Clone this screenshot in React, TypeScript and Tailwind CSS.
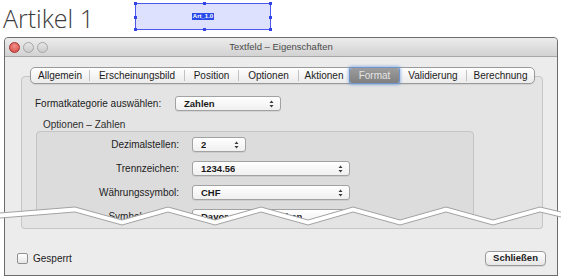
import React from 'react'

const TABS = [
  { label: 'Allgemein', w: 'w-[58px]' },
  { label: 'Erscheinungsbild', w: 'w-[94px]' },
  { label: 'Position', w: 'w-[53px]' },
  { label: 'Optionen', w: 'w-[59px]' },
  { label: 'Aktionen', w: 'w-[50px]' },
  { label: 'Format', w: 'w-[49px]', active: true },
  { label: 'Validierung', w: 'w-[66px]' },
  { label: 'Berechnung', w: 'w-[67px]' },
]

const ROWS = [
  { label: 'Dezimalstellen:', value: '2', w: 'w-[54px]' },
  { label: 'Trennzeichen:', value: '1234.56', w: 'w-[158px]' },
  { label: 'Währungssymbol:', value: 'CHF', w: 'w-[158px]' },
  { label: 'Symbolposition:', value: 'Davor mit Leerzeichen', w: 'w-[158px]' },
]

// zigzag cut, y relative to the window top (page y - 37)
const UPPER = [[0, 176], [75, 170], [122, 183], [168, 170], [215, 183], [261, 170], [308, 183], [353, 170], [400, 183], [446, 170], [493, 183], [540, 170], [561, 175]]
const GAP = 5

function Arrows() {
  return (
    <svg width="5" height="8" viewBox="0 0 5 8" className="shrink-0">
      <path d="M2.5 0.5 L4.5 3 L0.5 3 Z M0.5 5 L4.5 5 L2.5 7.5 Z" fill="#3a3a3a" />
    </svg>
  )
}

function Popup({ value, w }: { value: string; w: string }) {
  return (
    <div className={`${w} h-[15px] flex items-center justify-between pl-[8px] pr-[6px] rounded-[3px] border border-[#a2a2a2] bg-gradient-to-b from-white to-[#f0f0f0] shadow-[0_1px_0_rgba(0,0,0,0.07)] text-[9.5px] font-semibold text-[#1a1a1a] leading-none`}>
      <span className="truncate">{value}</span>
      <Arrows />
    </div>
  )
}

function Handle({ className }: { className: string }) {
  return <span className={`absolute w-[3px] h-[3px] bg-[#3343e6] ${className}`} />
}

function TitleBar() {
  return (
    <div className="relative h-[19px] shrink-0 flex items-center pl-[4px] gap-[3px] border-b border-[#a8a8a8] bg-gradient-to-b from-[#ececec] to-[#d2d2d2] rounded-t-[3px]">
      <span className="w-[11px] h-[11px] rounded-full border border-[#a5342f] bg-[radial-gradient(circle_at_50%_35%,#f3918b,#d3443d)]" />
      <span className="w-[11px] h-[11px] rounded-full border border-[#a6a6a6] bg-gradient-to-b from-[#e6e6e6] to-[#cbcbcb]" />
      <span className="w-[11px] h-[11px] rounded-full border border-[#a6a6a6] bg-gradient-to-b from-[#e6e6e6] to-[#cbcbcb]" />
      <div className="absolute inset-0 flex items-center justify-center text-[9.5px] text-[#4a4a4a]">
        Textfeld – Eigenschaften
      </div>
    </div>
  )
}

function Tabs() {
  return (
    <div className="relative z-10 ml-[25px] flex items-center h-[17px] w-fit rounded-[5px] border border-[#9a9a9a] bg-gradient-to-b from-white to-[#ebebeb] shadow-[0_1px_1px_rgba(0,0,0,0.08)] text-[10px] text-[#1c1c1c]">
      {TABS.map((t, i) => (
        <React.Fragment key={t.label}>
          {i > 0 && <span className="w-px h-[11px] bg-[#c2c2c2]" />}
          <span
            className={
              t.active
                ? `${t.w} h-[15px] flex items-center justify-center rounded-[2px] bg-gradient-to-b from-[#9d9d9d] to-[#7f7f7f] text-[#e4e4e4] shadow-[0_0_0_1px_#6f95cc,0_0_3px_2px_rgba(95,145,215,0.55)] relative z-10`
                : `${t.w} h-full flex items-center justify-center`
            }
          >
            {t.label}
          </span>
        </React.Fragment>
      ))}
    </div>
  )
}

function TopPart() {
  const clip =
    '[clip-path:polygon(0_0,561px_0,561px_175px,540px_170px,493px_183px,446px_170px,400px_183px,353px_170px,308px_183px,261px_170px,215px_183px,168px_170px,122px_183px,75px_170px,0_176px)]'
  return (
    <div className={`col-start-1 row-start-1 pl-[4px] ${clip}`}>
      <div className="w-[554px] h-[239px] flex flex-col border border-[#6c6c6c] rounded-t-[4px] bg-[#ececec] overflow-hidden">
        <TitleBar />
        <div className="pt-[10px]">
          <Tabs />
          <div className="-mt-[8px] ml-[16px] w-[522px] h-[200px] rounded-[4px] border border-[#c6c6c6] bg-[#e4e4e4] pt-[19px] px-[13px] text-[10px] text-[#1c1c1c]">
            <div className="flex items-center h-[15px]">
              <span className="w-[140px]">Formatkategorie auswählen:</span>
              <Popup value="Zahlen" w="w-[106px]" />
            </div>
            <div className="mt-[8px] pl-[8px] h-[12px] leading-[12px] text-[#2e2e2e]">Optionen – Zahlen</div>
            <div className="ml-[1px] w-[438px] h-[120px] rounded-[4px] border border-[#c4c4c4] bg-[#dcdcdc] pt-[5px] flex flex-col gap-[9px]">
              {ROWS.map(r => (
                <div key={r.label} className="flex items-center h-[15px]">
                  <span className="w-[142px] text-right">{r.label}</span>
                  <div className="ml-[13px]">
                    <Popup value={r.value} w={r.w} />
                  </div>
                </div>
              ))}
            </div>
          </div>
        </div>
      </div>
    </div>
  )
}

function BottomPart() {
  const clip =
    '[clip-path:polygon(0_181px,75px_175px,122px_188px,168px_175px,215px_188px,261px_175px,308px_188px,353px_175px,400px_188px,446px_175px,493px_188px,540px_175px,561px_180px,561px_239px,0_239px)]'
  return (
    <div className={`col-start-1 row-start-1 pl-[4px] ${clip}`}>
      <div className="w-[554px] h-[239px] flex flex-col justify-end border border-[#6c6c6c] bg-[#ececec]">
        <div className="ml-[16px] w-[522px] h-[30px] rounded-b-[4px] border-x border-b border-[#c6c6c6] bg-[#e4e4e4]" />
        <div className="h-[46px] pt-[13px] pl-[12px] pr-[11px] flex items-center justify-between text-[10px] text-[#1c1c1c]">
          <label className="flex items-center">
            <span className="w-[11px] h-[11px] rounded-[2px] border border-[#8f8f8f] bg-gradient-to-b from-white to-[#e6e6e6]" />
            <span className="ml-[5px]">Gesperrt</span>
          </label>
          <button className="w-[61px] h-[15px] flex items-center justify-center rounded-[4px] border border-[#999] bg-gradient-to-b from-white to-[#e6e6e6] shadow-[0_1px_0_rgba(0,0,0,0.08)] font-semibold text-[9.5px]">
            Schließen
          </button>
        </div>
      </div>
    </div>
  )
}

export default function App() {
  const upper = UPPER.map(p => p.join(',')).join(' ')
  const lower = UPPER.map(([x, y]) => `${x},${y + GAP}`).join(' ')
  return (
    <div className="relative w-[561px] h-[279px] bg-white overflow-hidden font-['Liberation_Sans',Arial,sans-serif]">
      <div className="h-[37px] flex items-start">
        <span className="w-[132px] ml-[3px] mt-[1px] font-['Open_Sans',sans-serif] font-light text-[25px] leading-[34px] text-[#3c3c3c]">Artikel 1</span>
        <div className="relative mt-[3px] w-[136px] h-[27px] border border-[#4b57ea] bg-[#dee1fd] flex items-center justify-center">
          <span className="bg-[#2b4be8] text-white text-[6px] leading-[7px] px-[1px] font-bold">Art_1.0</span>
          <Handle className="-left-[2px] -top-[2px]" />
          <Handle className="left-1/2 -top-[2px]" />
          <Handle className="-right-[2px] -top-[2px]" />
          <Handle className="-left-[2px] top-1/2 -mt-[1px]" />
          <Handle className="-right-[2px] top-1/2 -mt-[1px]" />
          <Handle className="-left-[2px] -bottom-[2px]" />
          <Handle className="left-1/2 -bottom-[2px]" />
          <Handle className="-right-[2px] -bottom-[2px]" />
        </div>
      </div>
      <div className="grid">
        <TopPart />
        <BottomPart />
      </div>
      <svg className="absolute left-0 top-[37px] pointer-events-none" width="561" height="239">
        <polyline points={upper} fill="none" stroke="#a3a3a3" strokeWidth="1" />
        <polyline points={lower} fill="none" stroke="#a3a3a3" strokeWidth="1" />
      </svg>
    </div>
  )
}
